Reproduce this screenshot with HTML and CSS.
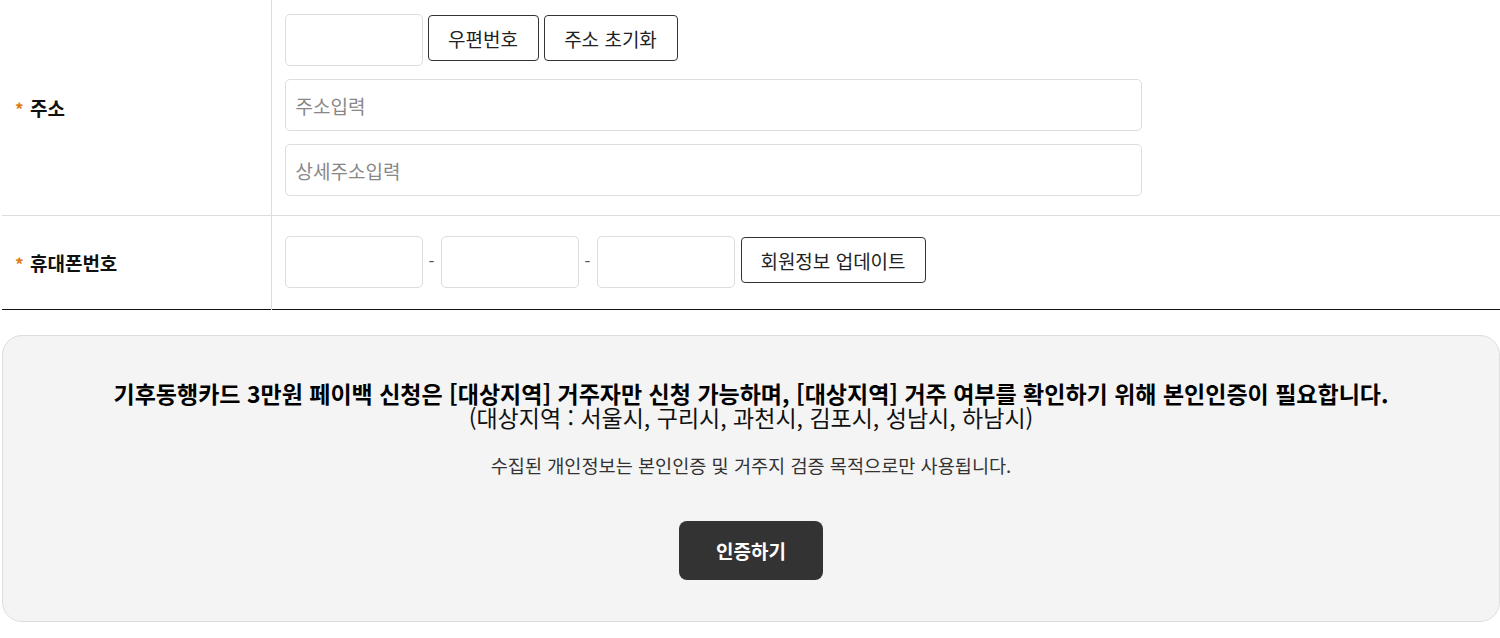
FILE: index.html
```html
<!DOCTYPE html>
<html lang="ko">
<head>
    <meta charset="UTF-8">
    <meta name="viewport" content="width=device-width, initial-scale=1.0">
    <title>기후동행카드 페이백 신청</title>
    <link rel="stylesheet" href="styles.css">
</head>
<body>
    <div class="wrap">
        <table class="form-table">
            <tr class="row-address">
                <th><span class="req">*</span> 주소</th>
                <td>
                    <div class="line">
                        <input type="text" class="input-short" id="zipcode">
                        <button type="button" class="btn-line btn-zip">우편번호</button>
                        <button type="button" class="btn-line btn-reset">주소 초기화</button>
                    </div>
                    <div class="line">
                        <input type="text" class="input-long" placeholder="주소입력">
                    </div>
                    <div class="line">
                        <input type="text" class="input-long" placeholder="상세주소입력">
                    </div>
                </td>
            </tr>
            <tr class="row-phone">
                <th><span class="req">*</span> 휴대폰번호</th>
                <td>
                    <div class="line">
                        <input type="text" class="input-short">
                        <span class="dash">-</span>
                        <input type="text" class="input-short">
                        <span class="dash">-</span>
                        <input type="text" class="input-short">
                        <button type="button" class="btn-line btn-update">회원정보 업데이트</button>
                    </div>
                </td>
            </tr>
        </table>

        <div class="auth-box">
            <p class="auth-title">기후동행카드 3만원 페이백 신청은 [대상지역] 거주자만 신청 가능하며, [대상지역] 거주 여부를 확인하기 위해 본인인증이 필요합니다.</p>
            <p class="auth-area">(대상지역 : 서울시, 구리시, 과천시, 김포시, 성남시, 하남시)</p>
            <p class="auth-note">수집된 개인정보는 본인인증 및 거주지 검증 목적으로만 사용됩니다.</p>
            <button type="button" class="btn-auth">인증하기</button>
        </div>
    </div>
</body>
</html>
```

FILE: styles.css
```css
body {
    margin: 0;
    padding: 0;
    background: #fff;
    color: #111;
    font-family: "Noto Sans CJK KR", "Noto Sans", sans-serif;
}
.wrap {
    padding-left: 2px;
}
.form-table {
    width: 1498px;
    border-collapse: collapse;
    border-bottom: 1px solid #111;
}
.form-table th {
    width: 269px;
    padding: 0 0 0 13px;
    text-align: left;
    font-size: 19px;
    font-weight: 700;
    color: #111;
    border-right: 1px solid #ddd;
    box-sizing: border-box;
}
.form-table td {
    padding: 14px 13px 19px;
    vertical-align: top;
}
.row-address {
    border-bottom: 1px solid #ddd;
}
.row-phone td {
    padding: 20px 13px 21px;
}
.req {
    color: #e07b12;
    font-size: 17px;
    font-weight: 700;
    margin-right: 1px;
}
.line {
    display: flex;
    align-items: flex-start;
    gap: 6px;
}
.line + .line {
    margin-top: 13px;
}
input {
    height: 52px;
    box-sizing: border-box;
    border: 1px solid #ddd;
    border-radius: 5px;
    padding: 0 10px;
    font-family: inherit;
    font-size: 19px;
    color: #111;
    background: #fff;
    outline: none;
}
input::placeholder {
    color: #888;
}
.input-short {
    width: 138px;
}
.input-long {
    width: 857px;
}
.btn-line {
    height: 46px;
    margin-top: 1px;
    padding: 0;
    border: 1px solid #333;
    border-radius: 4px;
    background: #fff;
    color: #222;
    font-family: inherit;
    font-size: 19px;
    cursor: pointer;
}
.btn-zip {
    width: 111px;
    margin-left: -1px;
}
.btn-reset {
    width: 134px;
    margin-left: -1px;
}
.btn-update {
    width: 185px;
}
.dash {
    width: 6px;
    line-height: 50px;
    text-align: center;
    font-size: 17px;
    color: #555;
}
.auth-box {
    margin-top: 25px;
    width: 1498px;
    box-sizing: border-box;
    height: 287px;
    padding: 45px 0 0;
    background: #f4f4f4;
    border: 1px solid #ddd;
    border-radius: 20px;
    text-align: center;
}
.auth-box p {
    margin: 0;
}
.auth-title {
    font-size: 23px;
    font-weight: 700;
    line-height: 24px;
    color: #000;
}
.auth-area {
    font-size: 23px;
    line-height: 24px;
    color: #111;
}
.auth-box .auth-note {
    margin-top: 24px;
    font-size: 18.6px;
    line-height: 24px;
    color: #333;
}
.btn-auth {
    display: block;
    margin: 44px auto 0;
    width: 144px;
    height: 59px;
    border: none;
    border-radius: 8px;
    background: #333;
    color: #fff;
    font-family: inherit;
    font-size: 19px;
    font-weight: 700;
    cursor: pointer;
}
```
